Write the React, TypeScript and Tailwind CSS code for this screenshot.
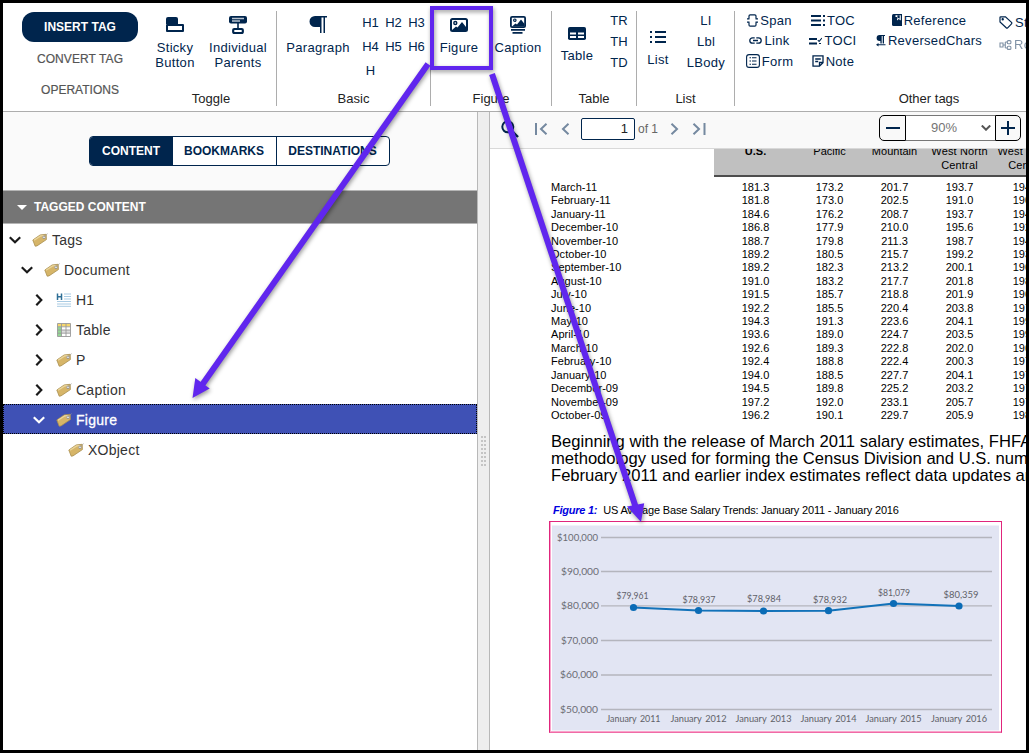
import type { ReactNode } from 'react';
import { clsx } from 'clsx';

type IconName = keyof typeof icons;

const icons = {
    sticky: (
        <svg width="18" height="16" viewBox="0 0 18 16" className="fill-current">
            <path d="M2 0h8q2 0 2 2v5H0V2q0-2 2-2z" />
            <path d="M1 8h16v6H1z" fill="white" stroke="currentColor" strokeWidth="2" strokeLinejoin="round" />
        </svg>
    ),
    parents: (
        <svg width="18" height="18" viewBox="0 0 18 18" fill="none" stroke="currentColor">
            <rect x="0" y="0" width="18" height="7.5" rx="2" fill="currentColor" stroke="none" />
            <path d="M3 2.5h12M3 5h8" stroke="#b9c3cf" strokeWidth="1.3" />
            <path d="M9 7v5" strokeWidth="1.6" />
            <rect x="4.2" y="13" width="9.6" height="4" rx="1" strokeWidth="2.2" />
        </svg>
    ),
    paragraph: (
        <svg width="18" height="18" viewBox="0 0 18 18" className="fill-current">
            <path d="M18 0v1.5h-2V17h-1.500V1.500h-2V17H11v-6H6A5.500 5.500 0 0 1 6 0z" />
        </svg>
    ),
    figure: (
        <svg width="18" height="14" viewBox="0 0 18 14" fill="none" stroke="currentColor">
            <rect x="1" y="1" width="16" height="12" rx="1.5" strokeWidth="2" />
            <circle cx="5.3" cy="5" r="1.5" strokeWidth="1.4" />
            <path d="M2 12l4-3.5 1.5 1L12 4l4 5v3z" fill="currentColor" stroke="none" />
        </svg>
    ),
    caption: (
        <svg width="16" height="18" viewBox="0 0 16 18" fill="none" stroke="currentColor">
            <rect x="0.9" y="0.9" width="14.2" height="10.2" rx="1.2" strokeWidth="1.8" />
            <circle cx="4.8" cy="4.2" r="1.2" strokeWidth="1.2" />
            <path d="M2 10.5l3.5-3L7 8.5l4-5 3.5 4.5v2.5z" fill="currentColor" stroke="none" />
            <path d="M1 13.8h14M2.5 16.8h10" strokeWidth="1.7" />
        </svg>
    ),
    table: (
        <svg width="18" height="13" viewBox="0 0 18 13" className="fill-current">
            <rect width="18" height="13" rx="1.8" />
            <path d="M2 5.500h6v2H2zM10 5.500h6v2h-6zM2 9h6v2H2zM10 9h6v2h-6z" fill="white" />
        </svg>
    ),
    list: (
        <svg width="16" height="12" viewBox="0 0 16 12" className="fill-current">
            <path d="M0 0h2v2H0zM0 5h2v2H0zM0 10h2v2H0zM5 0h11v2H5zM5 5h11v2H5zM5 10h11v2H5z" />
        </svg>
    ),
    span: (
        <svg width="11" height="13" viewBox="0 0 11 13" fill="none" stroke="currentColor" strokeWidth="1.2">
            <path d="M2 4.5V2Q2 .8 3.2 .8h4.6Q9 .8 9 2v2.5M2 8.5V11q0 1.2 1.2 1.2h4.6Q9 12.2 9 11V8.5M0 4.8h2.5M0 8.2h2.5M8.5 4.8H11M8.5 8.2H11" />
        </svg>
    ),
    link: (
        <svg width="13" height="7" viewBox="0 0 13 7" fill="none" stroke="currentColor" strokeWidth="1.3">
            <path d="M5.7 .8H3.5a2.7 2.7 0 0 0 0 5.4h2.2M7.3 .8h2.2a2.7 2.7 0 0 1 0 5.4H7.3M4 3.5h5" />
        </svg>
    ),
    form: (
        <svg width="14" height="14" viewBox="0 0 14 14" fill="none" stroke="currentColor" strokeWidth="1.1">
            <rect x="0.6" y="0.6" width="12.8" height="12.8" rx="2.5" />
            <path d="M3.5 3.8H5M6 3.8h4.5M3.5 7H5M6 7h4.5M3.5 10.2H5M6 10.2h4.5" />
        </svg>
    ),
    toc: (
        <svg width="14" height="11" viewBox="0 0 14 11" className="fill-current">
            <path d="M0 0h10v2H0zM0 4.500h10v2H0zM0 9h10v2H0zM12 0h2v2h-2zM12 4.500h2v2h-2zM12 9h2v2h-2z" />
        </svg>
    ),
    toci: (
        <svg width="13" height="8" viewBox="0 0 13 8" fill="none" stroke="currentColor">
            <path d="M0 2h8M0 6.500h8" strokeWidth="1.9" />
            <path d="M8.800 3.200l1.300 1.200L13 1M10 6.500h2" strokeWidth="1.1" />
        </svg>
    ),
    note: (
        <svg width="12" height="12" viewBox="0 0 12 12" fill="none" stroke="currentColor" strokeWidth="1.3">
            <path d="M1 .8h10v7L7.500 11.200H1zM11 7.500H7.500v3.500M3.200 4h5.600M3.200 6.500h3" />
        </svg>
    ),
    reference: (
        <svg width="10" height="12" viewBox="0 0 10 12" className="fill-current">
            <path d="M1.500 0H10v12H1.500Q0 12 0 10.500v-9Q0 0 1.500 0z" />
            <path d="M3.500 1.200h5.300v5.300L6.700 5 5 6.500V3H3.500z" fill="white" />
            <path d="M5.400 1.200h2.300v3.500l-1-.8-1.300.8z" />
        </svg>
    ),
    reversed: (
        <svg width="10" height="12" viewBox="0 0 10 12" className="fill-current">
            <path d="M9 0v1H8v7.500H6.700V1h-1v7.500H4.400V6H3.600a3 3 0 0 1 0-6zM2.500 9.200h7v1.100h-7v1.200L0 9.800l2.500-1.700z" />
        </svg>
    ),
    tag: (
        <svg width="14" height="13" viewBox="0 0 14 13" fill="none" stroke="currentColor" strokeWidth="1.2">
            <path d="M1.800 .8h4.700l6 5.600q.7.700 0 1.400l-3.800 4q-.8.700-1.500 0L1 6V1.600Q1 .8 1.800.8z" />
            <circle cx="3.700" cy="3.300" r=".6" fill="currentColor" />
        </svg>
    ),
    roles: (
        <svg width="13" height="10" viewBox="0 0 13 10" fill="none" stroke="currentColor" strokeWidth="1.1">
            <path d="M1 3h3v4H1zM4 5h2.300M6.300 2v6M6.300 2h2M6.300 8h2" />
            <rect x="8.300" y=".6" width="3.600" height="3.200" rx="1" />
            <rect x="8.300" y="6.200" width="3.600" height="3.200" rx="1" />
        </svg>
    ),
};

const ToolGroup = ({ label, className, children }: { label: string; className: string; children: ReactNode }) => (
    <div className={clsx('mt-2 flex h-[95px] shrink-0 flex-col border-r border-[#adadad]', className)}>
        <div className="flex h-[80px] w-full tracking-[0.3px] text-[#00254d]">{children}</div>
        <p className="text-center leading-[15px] text-[#222]">{label}</p>
    </div>
);

const Tool = ({ icon, label, className }: { icon: IconName; label: string; className?: string }) => (
    <button className={clsx('flex shrink-0 flex-col items-center', className)}>
        <span className="flex h-[20px] items-center">{icons[icon]}</span>
        <span className="mt-[5px] text-center leading-[15px] whitespace-pre">{label}</span>
    </button>
);

const SmallTool = ({ icon, label, className }: { icon: IconName; label: string; className?: string }) => (
    <button className={clsx('flex h-[20.5px] items-center gap-[2px] whitespace-nowrap', className)}>
        {icons[icon]}
        <span>{label}</span>
    </button>
);

const Ribbon = () => (
    <header className="flex h-[109px] shrink-0 overflow-hidden border-b border-[#adadad] bg-white text-[13px]">
        <div className="flex w-[143px] shrink-0 flex-col items-start pt-[9px] pl-[19px] text-[12px] text-[#555]">
            <button className="h-[30px] w-[116px] rounded-[12px] bg-[#00254d] font-bold text-white">INSERT TAG</button>
            <button className="mt-[2px] h-[30px] w-[116px] tracking-[0.1px] [-webkit-text-stroke:0.2px_#555]">CONVERT TAG</button>
            <button className="mt-[1px] h-[30px] w-[116px] [-webkit-text-stroke:0.2px_#555]">OPERATIONS</button>
        </div>
        <ToolGroup label="Toggle" className="w-[131px]">
            <Tool icon="sticky" label={'Sticky\nButton'} className="mt-[4px] ml-[7px] w-[44px]" />
            <Tool icon="parents" label={'Individual\nParents'} className="mt-[4px] ml-[10px] w-[62px]" />
        </ToolGroup>
        <ToolGroup label="Basic" className="w-[154px]">
            <Tool icon="paragraph" label="Paragraph" className="mt-[4px] ml-[8px] w-[66px]" />
            <div className="ml-[8px] grid h-[72px] w-[69px] grid-cols-3 grid-rows-3 items-center text-center tracking-normal">
                {['H1', 'H2', 'H3', 'H4', 'H5', 'H6', 'H'].map((tag) => (
                    <button key={tag}>{tag}</button>
                ))}
            </div>
        </ToolGroup>
        <ToolGroup label="Figure" className="w-[121px]">
            <Tool icon="figure" label="Figure" className="mt-[4px] ml-[5px] w-[46px]" />
            <Tool icon="caption" label="Caption" className="mt-[4px] ml-[11px] w-[50px]" />
        </ToolGroup>
        <ToolGroup label="Table" className="w-[85px]">
            <Tool icon="table" label="Table" className="mt-[12px] ml-[5px] w-[40px]" />
            <div className="-mt-[1px] ml-[9px] flex w-[26px] flex-col text-center tracking-normal">
                <button className="h-[21px]">TR</button>
                <button className="h-[21px]">TH</button>
                <button className="h-[21px]">TD</button>
            </div>
        </ToolGroup>
        <ToolGroup label="List" className="w-[98px]">
            <Tool icon="list" label="List" className="mt-[16px] ml-[6px] w-[30px]" />
            <div className="-mt-[1px] ml-[11px] flex w-[44px] flex-col text-center">
                <button className="h-[21px]">LI</button>
                <button className="h-[21px]">Lbl</button>
                <button className="h-[21px]">LBody</button>
            </div>
        </ToolGroup>
        <ToolGroup label="Other tags" className="w-[389px]">
            <div className="-mt-[1px] ml-[4px] flex w-[61px] flex-col items-center">
                <SmallTool icon="span" label="Span" />
                <SmallTool icon="link" label="Link" />
                <SmallTool icon="form" label="Form" />
            </div>
            <div className="-mt-[1px] ml-[2px] flex w-[62px] flex-col items-center">
                <SmallTool icon="toc" label="TOC" />
                <SmallTool icon="toci" label="TOCI" />
                <SmallTool icon="note" label="Note" />
            </div>
            <div className="-mt-[1px] ml-[9px] flex w-[112px] flex-col items-center">
                <SmallTool icon="reference" label="Reference" />
                <SmallTool icon="reversed" label="ReversedChars" />
            </div>
            <div className="-mt-[1px] ml-[14px] flex flex-col items-start">
                <SmallTool icon="tag" label="Style" className="mt-[2px]" />
                <SmallTool icon="roles" label="Roles" className="mt-[2px] opacity-50" />
            </div>
        </ToolGroup>
    </header>
);

const TagIcon = () => (
    <svg width="16" height="14" viewBox="0 0 16 14">
        <path d="M.8 7L8.200 1.900l6-.6.200 5.300L5 12.900l-1.800.3z" fill="#d6b568" stroke="#a98f50" strokeWidth=".8" strokeLinejoin="round" />
        <path d="M2 7.300l6.700-4.400 3.500-.3" stroke="#ead59c" strokeWidth="1.2" fill="none" />
        <circle cx="12" cy="4.300" r="1.300" fill="#fff" stroke="#888" strokeWidth=".8" />
        <path d="M12 4.300L15.700 .4" stroke="#999" strokeWidth=".6" />
    </svg>
);

const HeadingIcon = () => (
    <svg width="16" height="14" viewBox="0 0 16 14" fill="none">
        <path d="M8 1h7M8 3.500h7M8 6h7M1 8.500h14M1 11h14M1 13.300h14" stroke="#a9cbe3" />
        <path d="M1.500 .5v6.500M5.500 .5v6.500M1.500 3.800h4" stroke="#2f6f96" strokeWidth="1.5" />
    </svg>
);

const GridIcon = () => (
    <svg width="16" height="14" viewBox="0 0 16 14">
        <path d="M1.500 .5h13v13h-13z" fill="#fff" />
        <path d="M1.500 .5h13v3h-13z" fill="#f5d66b" />
        <path d="M1.500 3.500h4v10h-4z" fill="#93d694" />
        <path d="M5.500 7h9v3h-9z" fill="#ddd" />
        <path d="M1.500 .5h13v13h-13zM1.500 3.800h13M1.500 7h13M1.500 10.200h13M5.500 .5v13M10 .5v13" fill="none" stroke="#9a9a9a" strokeWidth=".9" />
    </svg>
);

const treeIcons = { tag: <TagIcon />, heading: <HeadingIcon />, grid: <GridIcon /> };

type TreeNode = {
    label: string;
    indent: string;
    icon: keyof typeof treeIcons;
    state?: 'open' | 'closed';
    selected?: boolean;
};

const tree: TreeNode[] = [
    { label: 'Tags', indent: 'pl-[5px]', icon: 'tag', state: 'open' },
    { label: 'Document', indent: 'pl-[17px]', icon: 'tag', state: 'open' },
    { label: 'H1', indent: 'pl-[29px]', icon: 'heading', state: 'closed' },
    { label: 'Table', indent: 'pl-[29px]', icon: 'grid', state: 'closed' },
    { label: 'P', indent: 'pl-[29px]', icon: 'tag', state: 'closed' },
    { label: 'Caption', indent: 'pl-[29px]', icon: 'tag', state: 'closed' },
    { label: 'Figure', indent: 'pl-[29px]', icon: 'tag', state: 'open', selected: true },
    { label: 'XObject', indent: 'pl-[41px]', icon: 'tag' },
];

const TreeRow = ({ label, indent, icon, state, selected }: TreeNode) => (
    <div
        className={clsx(
            'flex h-[30px] items-center pt-[2px]',
            indent,
            selected ? 'bg-[#3f51b5] text-white outline-1 -outline-offset-1 outline-dotted outline-black' : 'text-[#333]',
        )}
    >
        <span className={clsx('flex w-[24px] shrink-0', state === 'closed' ? 'pl-[2px]' : 'pl-[1px]', selected ? 'text-white' : 'text-[#1a1a1a]')}>
            {state && (
                <svg width="12" height="12" viewBox="0 0 12 12" fill="none" stroke="currentColor" strokeWidth="2.2">
                    <path d={state === 'open' ? 'M.8 3.2L6 8.2l5.200-5' : 'M2.300 .8L7.300 6l-5 5.200'} />
                </svg>
            )}
        </span>
        <span className="w-[20px] shrink-0">{treeIcons[icon]}</span>
        <span className={clsx('text-[14px] tracking-[0.25px]', selected && '[-webkit-text-stroke:0.3px_white]')}>{label}</span>
    </div>
);

const TagPanel = () => (
    <aside className="flex w-[474px] shrink-0 flex-col bg-white">
        <div className="flex h-[78px] justify-center bg-[#fafafa] pt-[24px]">
            <div className="-ml-[2px] flex h-[30px] w-[301px] overflow-hidden rounded-[4px] border border-[#00254d] bg-white text-[12px] font-bold text-[#00254d]">
                <button className="w-[83px] bg-[#00254d] text-white">CONTENT</button>
                <button className="w-[104px] border-r border-[#00254d]">BOOKMARKS</button>
                <button className="flex-1">DESTINATIONS</button>
            </div>
        </div>
        <div className="flex h-[34px] items-center border-y border-[#b5b5b5] bg-[#757575] pl-[14px] text-[12px] font-bold text-white">
            <svg width="10" height="5" viewBox="0 0 10 5" className="mr-[7px] fill-current">
                <path d="M0 0h10L5 5z" />
            </svg>
            TAGGED CONTENT
        </div>
        {tree.map((node) => (
            <TreeRow key={node.label} {...node} />
        ))}
    </aside>
);

const Splitter = () => (
    <div className="flex w-[13px] shrink-0 flex-col items-center border-x border-[#b8b8b8] bg-[#eee] pt-[324px]">
        <svg width="6" height="32" viewBox="0 0 6 32" stroke="#c4c4c4" strokeWidth="2" strokeDasharray="2 2">
            <path d="M1 0v31M4 0v31" />
        </svg>
    </div>
);

const ViewerToolbar = () => (
    <div className="flex h-[37px] shrink-0 items-center border-b border-[#d9d9d9] bg-[#f9f9f9] pr-[5px] pb-[3px] pl-[11px] text-[#7589a0]">
        <svg width="18" height="18" viewBox="0 0 18 18" fill="none" stroke="#00254d" strokeWidth="2">
            <circle cx="6.800" cy="6.800" r="5.500" />
            <path d="M11 11l6 6" strokeWidth="2.400" />
        </svg>
        <svg width="14" height="12" viewBox="0 0 14 12" fill="none" stroke="currentColor" strokeWidth="2" className="ml-[15px]">
            <path d="M2 0v12M12.500 .8L7 6l5.500 5.200" />
        </svg>
        <svg width="9" height="12" viewBox="0 0 9 12" fill="none" stroke="currentColor" strokeWidth="2" className="ml-[13px]">
            <path d="M7.500 .8L2 6l5.500 5.200" />
        </svg>
        <input
            readOnly
            value="1"
            className="ml-[11px] h-[22px] w-[54px] rounded-[2px] border border-[#00254d] bg-white pr-[6px] text-right text-[13px] text-[#222]"
        />
        <span className="ml-[3px] text-[12px] text-[#666]">of 1</span>
        <svg width="9" height="12" viewBox="0 0 9 12" fill="none" stroke="currentColor" strokeWidth="2" className="ml-[12px]">
            <path d="M1.500 .8L7 6l-5.500 5.200" />
        </svg>
        <svg width="14" height="12" viewBox="0 0 14 12" fill="none" stroke="currentColor" strokeWidth="2" className="ml-[13px]">
            <path d="M1.500 .8L7 6l-5.500 5.200M12.500 0v12" />
        </svg>
        <div className="mt-[-1px] ml-auto flex h-[26px] text-[13px] text-[#757575]">
            <button className="flex w-[27px] items-center justify-center rounded-l-[5px] border border-black bg-[#f9f9f9]">
                <svg width="14" height="14" stroke="#00254d" strokeWidth="2"><path d="M0 7h14" /></svg>
            </button>
            <div className="flex w-[89px] items-center border-y border-[#777] bg-white pl-[25px]">
                90%
                <svg width="10" height="6" viewBox="0 0 10 6" fill="none" stroke="#555" strokeWidth="2" className="mr-[4px] ml-auto">
                    <path d="M.8 .5L5 4.700 9.200 .5" />
                </svg>
            </div>
            <button className="flex w-[26px] items-center justify-center rounded-r-[5px] border border-black bg-[#f9f9f9]">
                <svg width="14" height="14" stroke="#00254d" strokeWidth="2"><path d="M0 7h14M7 0v14" /></svg>
            </button>
        </div>
    </div>
);

const rows = [
    ['March-11', '181.3', '173.2', '201.7', '193.7', '194.2'],
    ['February-11', '181.8', '173.0', '202.5', '191.0', '190.4'],
    ['January-11', '184.6', '176.2', '208.7', '193.7', '194.3'],
    ['December-10', '186.8', '177.9', '210.0', '195.6', '192.7'],
    ['November-10', '188.7', '179.8', '211.3', '198.7', '194.1'],
    ['October-10', '189.2', '180.5', '215.7', '199.2', '193.8'],
    ['September-10', '189.2', '182.3', '213.2', '200.1', '196.5'],
    ['August-10', '191.0', '183.2', '217.7', '201.8', '198.2'],
    ['July-10', '191.5', '185.7', '218.8', '201.9', '196.9'],
    ['June-10', '192.2', '185.5', '220.4', '203.8', '197.0'],
    ['May-10', '194.3', '191.3', '223.6', '204.1', '199.6'],
    ['April-10', '193.6', '189.0', '224.7', '203.5', '199.1'],
    ['March-10', '192.6', '189.3', '222.8', '202.0', '196.7'],
    ['February-10', '192.4', '188.8', '222.4', '200.3', '197.5'],
    ['January-10', '194.0', '188.5', '227.7', '204.1', '197.3'],
    ['December-09', '194.5', '189.8', '225.2', '203.2', '197.6'],
    ['November-09', '197.2', '192.0', '233.1', '205.7', '197.4'],
    ['October-09', '196.2', '190.1', '229.7', '205.9', '198.8'],
];

const gridLines = [
    { label: '$100,000', y: 16.5, x: 8, width: 41 },
    { label: '$90,000', y: 50.5, x: 12, width: 38 },
    { label: '$80,000', y: 84.8, x: 12, width: 38 },
    { label: '$70,000', y: 119.5, x: 12, width: 37 },
    { label: '$60,000', y: 154, x: 11, width: 38 },
    { label: '$50,000', y: 188.5, x: 11, width: 38 },
];

const points = [
    { value: '$79,961', date: 'January 2011', x: 84.5, y: 86.5, labelX: 83.5, labelY: 78, width: 32, dateX: 84.5, dateWidth: 54 },
    { value: '$78,937', date: 'January 2012', x: 149.5, y: 89.5, labelX: 150, labelY: 81.5, width: 33, dateX: 149.5, dateWidth: 56 },
    { value: '$78,984', date: 'January 2013', x: 214.5, y: 90, labelX: 215, labelY: 81, width: 34, dateX: 214.5, dateWidth: 56 },
    { value: '$78,932', date: 'January 2014', x: 279.5, y: 89.7, labelX: 281, labelY: 81.5, width: 34, dateX: 279.5, dateWidth: 56 },
    { value: '$81,079', date: 'January 2015', x: 344.5, y: 82.5, labelX: 345, labelY: 75, width: 32, dateX: 344.5, dateWidth: 56 },
    { value: '$80,359', date: 'January 2016', x: 410, y: 85, labelX: 412, labelY: 76.5, width: 35, dateX: 410, dateWidth: 56 },
];

const SalaryChart = () => (
    <div className="h-[212px] w-[453px] border border-[#e0257c] border-b-[#f06ba6] bg-white">
        <svg width="451" height="210" viewBox="1 1 451 210" className="block font-['Lato',sans-serif] text-[8.5px]">
            <path d="M1.500 1v210M1 210.500h451" fill="none" stroke="#f9a3ca" />
            <rect x="3" y="4.500" width="447" height="205" fill="#e2e5f3" />
            {gridLines.map((line) => (
                <g key={line.label}>
                    <path d={`M52 ${line.y}h391`} stroke="#b4b5bd" strokeWidth="1.3" />
                    <text x={line.x} y={line.y + 3.2} textLength={line.width} lengthAdjust="spacingAndGlyphs" fill="#6b6c73">
                        {line.label}
                    </text>
                </g>
            ))}
            <polyline points={points.map((p) => `${p.x},${p.y}`).join(' ')} fill="none" stroke="#1272b9" strokeWidth="1.9" />
            {points.map((p) => (
                <g key={p.date} fill="#606168">
                    <circle cx={p.x} cy={p.y} r="3.6" fill="#0b6cb6" />
                    <text x={p.labelX - p.width / 2} y={p.labelY} textLength={p.width} lengthAdjust="spacingAndGlyphs">
                        {p.value}
                    </text>
                    <text
                        x={p.dateX - p.dateWidth / 2}
                        y="201"
                        textLength={p.dateWidth}
                        lengthAdjust="spacingAndGlyphs"
                        className="[word-spacing:1.2px]"
                    >
                        {p.date}
                    </text>
                </g>
            ))}
        </svg>
    </div>
);

const Viewer = () => (
    <main className="flex min-w-0 flex-1 flex-col bg-white">
        <ViewerToolbar />
        <div className="flex-1 overflow-hidden text-black">
            <div className="ml-[61px] w-[510px]">
                <div className="ml-[163px] grid h-[28px] w-[347px] grid-cols-[83px_65px_65px_65px_69px] items-start overflow-hidden border-b-2 border-[#4d4d4d] bg-[#c0c0c0] text-center text-[11px] leading-[13.5px]">
                    <span className="-mt-[4px] font-bold">U.S.</span>
                    <span className="-mt-[4px]">Pacific</span>
                    <span className="-mt-[4px]">Mountain</span>
                    <span className="-mt-[4px] tracking-[0.15px]">West North Central</span>
                    <span className="-mt-[4px] tracking-[0.15px]">West South Central</span>
                </div>
                <div className="h-[245px] pt-[4px] text-[11px] leading-[13.41px]">
                    {rows.map(([month, ...values]) => (
                        <div key={month} className="grid h-[13.41px] grid-cols-[163px_83px_65px_65px_65px_69px]">
                            <span className="tracking-[0.05px]">{month}</span>
                            {values.map((value, i) => (
                                <span key={i} className="text-center">{value}</span>
                            ))}
                        </div>
                    ))}
                </div>
                <p className="mt-[11px] text-[16.6px] leading-[17px] whitespace-nowrap">
                    Beginning with the release of March 2011 salary estimates, FHFA
                    <br />
                    methodology used for forming the Census Division and U.S. numbers
                    <br />
                    February 2011 and earlier index estimates reflect data updates and
                </p>
                <p className="mt-[20px] ml-[2px] h-[13px] text-[11px] leading-[13px] tracking-[-0.18px] whitespace-nowrap">
                    <b className="mr-[6px] tracking-[-0.25px] text-[#0000e0] italic">Figure 1:</b>
                    US Average Base Salary Trends: January 2011 - January 2016
                </p>
            </div>
            <div className="mt-[4px] ml-[59px]">
                <SalaryChart />
            </div>
        </div>
    </main>
);

// Callout box and arrows drawn on top of the whole window
const Callouts = () => (
    <svg
        width="1029"
        height="753"
        viewBox="0 0 1029 753"
        className="pointer-events-none absolute -top-[3px] -left-[3px] drop-shadow-[1px_2px_2px_rgba(0,0,0,0.4)]"
        fill="#6026ee"
        stroke="#6026ee"
    >
        <rect x="432" y="8" width="59" height="60" fill="none" strokeWidth="4" />
        <path d="M428 64L202 385M492 74L636 508" strokeWidth="6" />
        <path d="M192.500 398l2.800-20 14.400 10.500zM641 522l-14-15.500 17.200-3.200z" stroke="none" />
    </svg>
);

const App = () => (
    <div className="relative flex h-[753px] w-[1029px] flex-col overflow-hidden border-[3px] border-black bg-white font-['Liberation_Sans',Arial,sans-serif]">
        <Ribbon />
        <div className="flex min-h-0 flex-1">
            <TagPanel />
            <Splitter />
            <Viewer />
        </div>
        <Callouts />
    </div>
);

export default App;
